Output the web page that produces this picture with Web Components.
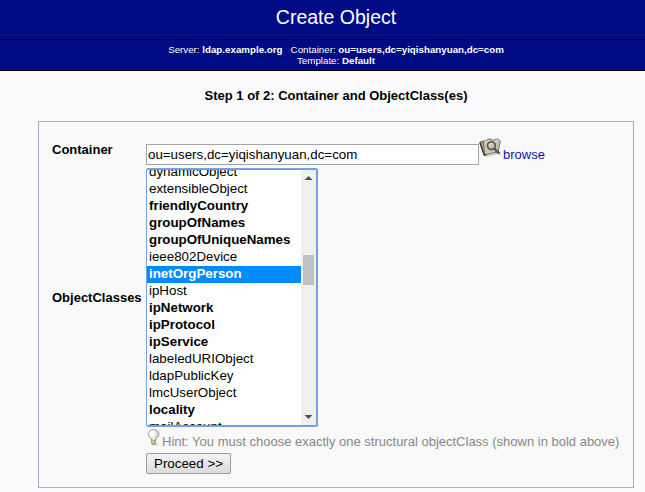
<!DOCTYPE html>
<html lang="en">
<head>
<meta charset="utf-8">
<title>Create Object</title>
<style>
html,body{margin:0;height:100%;overflow:hidden}
body{background:#fcfcfe;font:13.333px/15px "Liberation Sans",Arial,sans-serif;color:#000}
</style>
</head>
<body>
<create-page></create-page>
<script>
const define = (name, html) => customElements.define(name, class extends HTMLElement {
  constructor() {
    super();
    this.attachShadow({mode: "open"}).innerHTML = html;
  }
});

define("page-title", `<style>
:host{display:block;box-sizing:border-box;height:40px;padding-top:5px;background:#000a84;border-bottom:1px solid #000;color:#fff;text-align:center;font-size:19.5px;line-height:25px;padding-left:27px}
</style><slot></slot>`);

define("page-subtitle", `<style>
:host{display:block;box-sizing:border-box;height:31px;padding:4px 0 0 27px;background:#000a84;border-bottom:1px solid #000;color:#fff;text-align:center;font-size:9.75px;line-height:11px}
</style><slot></slot>`);

define("folder-icon", `<style>:host{display:block;width:24px;height:20px}svg{display:block}</style>
<svg width="24" height="20" viewBox="0 0 24 20">
<path d="M5 17.500l13-2.500 4 3-1.500-11 1 8-6 2-9 2z" fill="#777" opacity=".3"/>
<path d="M.8 4.300L4.500 3l2 2 1 11.500-2.300.6z" fill="#a69d8b" stroke="#454239" stroke-width=".9"/>
<path d="M4.500 3.400l3.500-1 .7-1.200 2.800-.4.800 1.200 3.200.2.900-1.200 3.300.3.500 1.500 1.100.5-2.300 10.600L5.500 17z" fill="#cdc3ae" stroke="#6b655a" stroke-width=".9"/>
<path d="M5 4.200l4-1 4 .3 3 .2 1.300-1.600 2.400.4" fill="none" stroke="#eee6d5" stroke-width=".9"/>
<path d="M1 4.800l4.200 12.300 2.500-.6" fill="none" stroke="#33312c" stroke-width="1.200"/>
<circle cx="12.400" cy="7.600" r="3.900" fill="#c6c0b1" stroke="#55534b" stroke-width="1.600"/>
<path d="M10.500 8.200a2.200 2.200 0 0 1 3-2.400" fill="none" stroke="#eeeade"/>
<path d="M15.300 10.700l5 4.800" stroke="#4d4b43" stroke-width="2.500"/>
<path d="M16.200 11.600l3.400 3.300" stroke="#9b968b" stroke-width=".7"/>
</svg>`);

define("bulb-icon", `<style>:host{display:block;width:16px;height:18px}svg{display:block}</style>
<svg width="16" height="18" viewBox="0 0 16 18">
<defs><radialGradient id="g" cx=".38" cy=".4"><stop offset="0" stop-color="#fff"/><stop offset=".55" stop-color="#f3f3f1"/><stop offset="1" stop-color="#c9c9c9"/></radialGradient></defs>
<ellipse cx="9" cy="15.300" rx="3.800" ry="1.200" fill="#aaa" opacity=".4"/>
<path d="M5.300 11C5 9 2.200 8.300 2.200 5.400a5.400 5 0 0 1 10.800 0c0 2.900-2.800 3.600-3.100 5.600z" fill="url(#g)" stroke="#a2a2a2" stroke-width=".9"/>
<path d="M6 8.500l.2 2.500h2.600l.4-2.500z" fill="#fff2c8"/>
<path d="M5.400 11h4.300v3.300l-1 1.300H6.400l-1-1.300z" fill="#b3a674" stroke="#7f795e" stroke-width=".5"/>
<path d="M5.800 12h2.500M5.800 13.500h2.500" stroke="#eee3b0" stroke-width=".8"/>
</svg>`);

define("text-field", `<style>
:host{display:block;box-sizing:border-box;width:333px;height:21px;border:1px solid #a4a4a4;background:#fff;padding:2px 1px;white-space:nowrap}
</style><slot></slot>`);

define("list-row", `<style>
:host{display:block;height:17px;line-height:16px;padding-left:2px;white-space:nowrap}
:host([structural]){font-weight:bold}
:host([selected]){background:#008cff;color:#fff}
</style><slot></slot>`);

define("list-box", `<style>
:host{display:grid;grid-template-columns:154px 15px;box-sizing:border-box;width:172px;height:259px;border:1px solid #72a4e7;border-radius:2px;background:#fff;box-shadow:inset -1px 1px #6ca0e6,inset -1px -1px #6ca0e6;padding:1px 1px 1px 0}
.rows{height:255px;overflow:hidden}
.inner{margin-top:-6px}
.bar{height:255px;background:#f0f0f0;display:grid;grid-template-rows:85px 30px 1fr;justify-items:center}
.thumb{background:#c1c1c1;width:11px}
svg{display:block}
.down{align-self:end}
</style><div class="rows"><div class="inner"><slot></slot></div></div>
<div class="bar"><svg width="15" height="15"><path d="M3.500 10L7.500 6l4 4z" fill="#505050"/></svg><div class="thumb"></div><svg class="down" width="15" height="15"><path d="M3.500 5h8l-4 4z" fill="#505050"/></svg></div>`);

define("push-button", `<style>
:host{display:block;box-sizing:border-box;width:85px;height:21px;border:1px solid #9b9b9b;border-radius:2px;background:linear-gradient(#f4f4f4,#dcdcdc);text-align:center;line-height:19px}
</style><slot></slot>`);

define("form-panel", `<style>
:host{display:block;box-sizing:border-box;width:596px;height:367px;margin-left:38px;border:1px solid #aaaacc;background:#f9f9f9;padding:16px 0 0 13px}
.grid{display:grid;grid-template-columns:94px 1fr;grid-template-rows:30px 259px 26px 21px}
.label{font-weight:bold;font-size:13px}
.label.first{padding-top:4px}
.label.mid{align-self:center}
.line{display:flex}
.field{margin-top:6px}
.link{color:#1111bb;margin-top:9px;font-size:13px}
.hint{display:flex;grid-column:2;color:#888;white-space:nowrap;font-size:13px}
.hint bulb-icon{margin-top:2px}
.hint span{margin-top:7px}
push-button{grid-column:2}
</style>
<div class="grid">
<div class="label first">Container</div>
<div class="line"><text-field class="field">ou=users,dc=yiqishanyuan,dc=com</text-field><folder-icon></folder-icon><span class="link">browse</span></div>
<div class="label mid">ObjectClasses</div>
<list-box><list-row>dynamicObject</list-row><list-row>extensibleObject</list-row><list-row structural>friendlyCountry</list-row><list-row structural>groupOfNames</list-row><list-row structural>groupOfUniqueNames</list-row><list-row>ieee802Device</list-row><list-row structural selected>inetOrgPerson</list-row><list-row>ipHost</list-row><list-row structural>ipNetwork</list-row><list-row structural>ipProtocol</list-row><list-row structural>ipService</list-row><list-row>labeledURIObject</list-row><list-row>ldapPublicKey</list-row><list-row>lmcUserObject</list-row><list-row structural>locality</list-row><list-row>mailAccount</list-row></list-box>
<div class="hint"><bulb-icon></bulb-icon><span>Hint: You must choose exactly one structural objectClass (shown in bold above)</span></div>
<push-button>Proceed &gt;&gt;</push-button>
</div>`);

define("create-page", `<style>
:host{display:block}
h3{margin:0;padding:17px 0 17px 27px;text-align:center;font-size:13px;line-height:16px}
</style>
<page-title>Create Object</page-title>
<page-subtitle>Server: <b>ldap.example.org</b> &nbsp; Container: <b>ou=users,dc=yiqishanyuan,dc=com</b><br>Template: <b>Default</b></page-subtitle>
<h3>Step 1 of 2: Container and ObjectClass(es)</h3>
<form-panel></form-panel>`);
</script>
</body>
</html>
